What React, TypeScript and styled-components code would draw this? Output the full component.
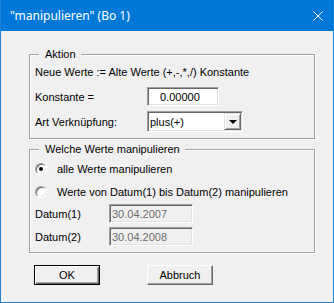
import React from "react";
import styled, { createGlobalStyle } from "styled-components";

const GlobalStyle = createGlobalStyle`
  html, body {
    margin: 0;
    padding: 0;
    background: #f0f0f0;
  }
  * {
    box-sizing: border-box;
  }
`;

const Window = styled.div`
  width: 334px;
  height: 303px;
  border: 1px solid #1883d7;
  border-top: none;
  background: #f0f0f0;
  font-family: "Liberation Sans", Arial, sans-serif;
  font-size: 11px;
  color: #000;
`;

const TitleBar = styled.div`
  height: 31px;
  background: #0078d7;
  display: flex;
  align-items: center;
  justify-content: space-between;
  padding: 0 10px 0 9px;
  color: #fff;
  font-family: "Noto Sans", "Open Sans", sans-serif;
  font-size: 12px;
`;

const Body = styled.div`
  display: flex;
  flex-direction: column;
  padding-left: 28px;
`;

const Group = styled.fieldset<{ $top: number }>`
  width: 286px;
  margin: ${(p) => p.$top}px 0 0 0;
  padding: 0 0 6px 5px;
  border: 1px solid #a0a0a0;
  box-shadow: inset 1px 1px 0 #fff, 1px 1px 0 #fff;
  min-width: 0;
`;

const Legend = styled.legend`
  margin-left: 4px;
  padding: 0 5px 0 6px;
  line-height: 14px;
  background: #f0f0f0;
`;

const Row = styled.div<{ $h: number; $mt: number }>`
  display: flex;
  align-items: center;
  height: ${(p) => p.$h}px;
  margin-top: ${(p) => p.$mt}px;
`;

const Label = styled.span<{ $w: number }>`
  width: ${(p) => p.$w}px;
  flex: none;
`;

const Sunken = styled.div<{ $w: number; $h: number; $disabled?: boolean }>`
  width: ${(p) => p.$w}px;
  height: ${(p) => p.$h}px;
  border: 1px solid;
  border-color: #a0a0a0 #fff #fff #a0a0a0;
  box-shadow: inset 1px 1px 0 #696969, inset -1px -1px 0 #e3e3e3;
  background: ${(p) => (p.$disabled ? "#f0f0f0" : "#fff")};
  color: ${(p) => (p.$disabled ? "#6d6d6d" : "#000")};
  display: flex;
  align-items: center;
`;

const InputText = styled.span<{ $pl: number }>`
  padding-left: ${(p) => p.$pl}px;
`;

const DropButton = styled.div`
  margin-left: auto;
  margin-right: 1px;
  width: 17px;
  height: 17px;
  background: #f0f0f0;
  border: 1px solid;
  border-color: #e3e3e3 #696969 #696969 #e3e3e3;
  box-shadow: inset 1px 1px 0 #fff, inset -1px -1px 0 #a0a0a0;
  display: flex;
  align-items: center;
  justify-content: center;
`;

const Arrow = styled.span`
  width: 0;
  height: 0;
  border-left: 4px solid transparent;
  border-right: 4px solid transparent;
  border-top: 4px solid #000;
`;

const Radio = styled.span<{ $checked?: boolean }>`
  width: 12px;
  height: 12px;
  margin-left: 0;
  margin-right: 10px;
  border-radius: 50%;
  border: 1px solid;
  border-color: #a0a0a0 #fff #fff #a0a0a0;
  box-shadow: inset 1px 1px 0 #696969, inset -1px -1px 0 #e3e3e3;
  background: #fff;
  display: flex;
  align-items: center;
  justify-content: center;
  flex: none;
  &::after {
    content: "";
    width: 4px;
    height: 4px;
    border-radius: 50%;
    background: ${(p) => (p.$checked ? "#000" : "transparent")};
  }
`;

const Buttons = styled.div`
  display: flex;
  gap: 47px;
  margin: 12px 0 0 5px;
`;

const Button = styled.button<{ $default?: boolean }>`
  width: 66px;
  height: 20px;
  padding: 0;
  font: inherit;
  color: #000;
  background: #f0f0f0;
  border: 1px solid;
  border-color: ${(p) =>
    p.$default ? "#000" : "#fff #696969 #696969 #fff"};
  box-shadow: ${(p) =>
    p.$default
      ? "inset 1px 1px 0 #fff, inset -1px -1px 0 #696969, inset -2px -2px 0 #a0a0a0"
      : "inset -1px -1px 0 #a0a0a0"};
`;

const CloseIcon = () => (
  <svg width="10" height="10" viewBox="0 0 10 10">
    <path d="M0.5 0.5 L9.5 9.5 M9.5 0.5 L0.5 9.5" stroke="#fff" strokeWidth="1" />
  </svg>
);

export default function App() {
  return (
    <>
      <GlobalStyle />
      <Window>
        <TitleBar>
          <span>"manipulieren" (Bo 1)</span>
          <CloseIcon />
        </TitleBar>
        <Body>
          <Group $top={16}>
            <Legend>Aktion</Legend>
            <Row $h={16} $mt={3}>
              Neue Werte := Alte Werte (+,-,*,/) Konstante
            </Row>
            <Row $h={19} $mt={7}>
              <Label $w={112}>Konstante =</Label>
              <Sunken $w={72} $h={19}>
                <InputText $pl={12}>0.00000</InputText>
              </Sunken>
            </Row>
            <Row $h={21} $mt={5}>
              <Label $w={112}>Art Verknüpfung:</Label>
              <Sunken $w={96} $h={21}>
                <InputText $pl={2}>plus(+)</InputText>
                <DropButton>
                  <Arrow />
                </DropButton>
              </Sunken>
            </Row>
          </Group>
          <Group $top={3}>
            <Legend>Welche Werte manipulieren</Legend>
            <Row $h={16} $mt={5}>
              <Radio $checked />
              alle Werte manipulieren
            </Row>
            <Row $h={16} $mt={7}>
              <Radio />
              Werte von Datum(1) bis Datum(2) manipulieren
            </Row>
            <Row $h={19} $mt={4}>
              <Label $w={74}>Datum(1)</Label>
              <Sunken $w={84} $h={19} $disabled>
                <InputText $pl={2}>30.04.2007</InputText>
              </Sunken>
            </Row>
            <Row $h={19} $mt={4}>
              <Label $w={74}>Datum(2)</Label>
              <Sunken $w={84} $h={19} $disabled>
                <InputText $pl={2}>30.04.2008</InputText>
              </Sunken>
            </Row>
          </Group>
          <Buttons>
            <Button $default>OK</Button>
            <Button>Abbruch</Button>
          </Buttons>
        </Body>
      </Window>
    </>
  );
}
